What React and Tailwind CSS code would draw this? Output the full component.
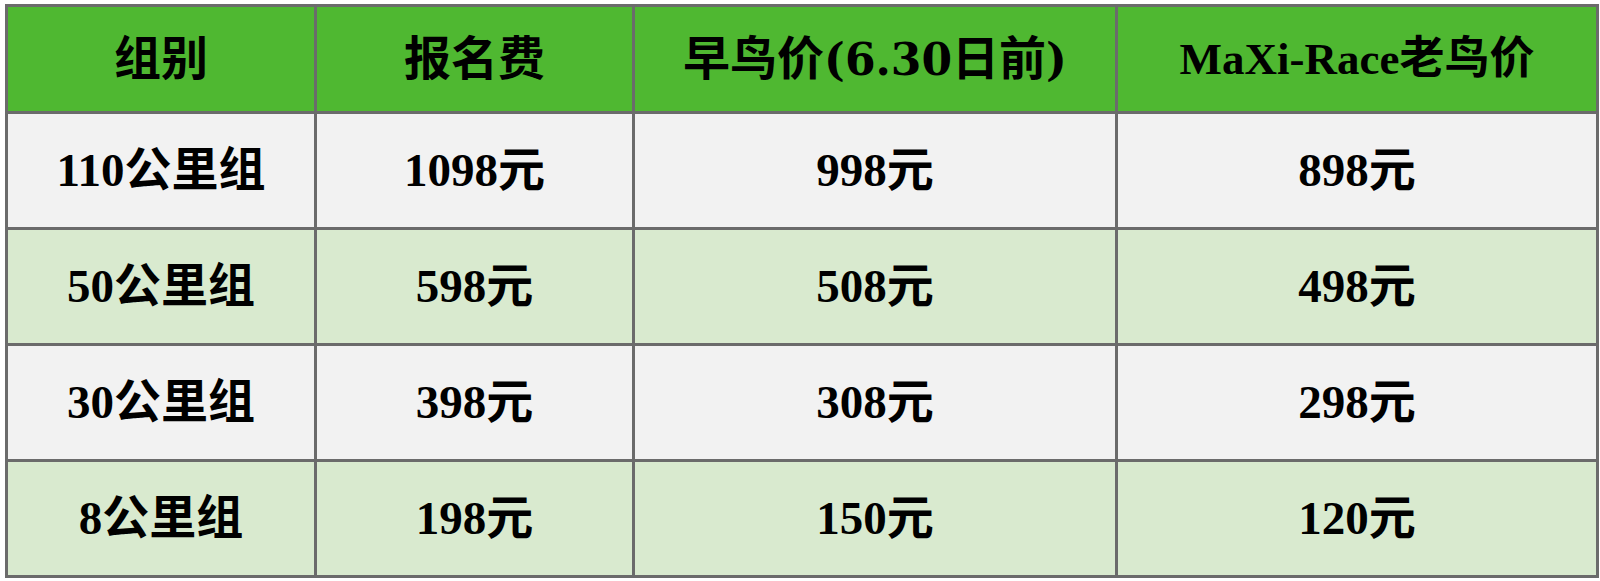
const rows = [
  ["110公里组", "1098元", "998元", "898元"],
  ["50公里组", "598元", "508元", "498元"],
  ["30公里组", "398元", "308元", "298元"],
  ["8公里组", "198元", "150元", "120元"],
];

const cell = "border-[3px] border-[#6b6b6b] text-center leading-none";

export default function App() {
  return (
    <div className="h-[581px] w-[1600px] bg-white pl-[5px] pt-[4px]">
      <table
        className="w-[1591px] table-fixed border-collapse text-[47px] font-bold text-black"
        style={{ fontFamily: '"Liberation Serif", "Noto Sans CJK SC", serif' }}
      >
        <colgroup>
          <col className="w-[309px]" />
          <col className="w-[318px]" />
          <col className="w-[483px]" />
          <col className="w-[481px]" />
        </colgroup>
        <thead>
          <tr className="h-[107px] bg-[#4fb831]">
            <th className={cell}>组别</th>
            <th className={cell}>报名费</th>
            <th className={cell}>
              早鸟价
              <span className="font-['DejaVu_Serif'] text-[44px]">(6.30</span>
              日前
              <span className="font-['DejaVu_Serif'] text-[44px]">)</span>
            </th>
            <th className={cell + " text-[45px]"}>MaXi-Race老鸟价</th>
          </tr>
        </thead>
        <tbody>
          {rows.map((r, i) => (
            <tr key={r[0]} className={i % 2 === 0 ? "h-[116px] bg-[#f2f2f2]" : "h-[116px] bg-[#d9eacf]"}>
              {r.map((c, j) => (
                <td key={j} className={cell}>
                  {c}
                </td>
              ))}
            </tr>
          ))}
        </tbody>
      </table>
    </div>
  );
}
